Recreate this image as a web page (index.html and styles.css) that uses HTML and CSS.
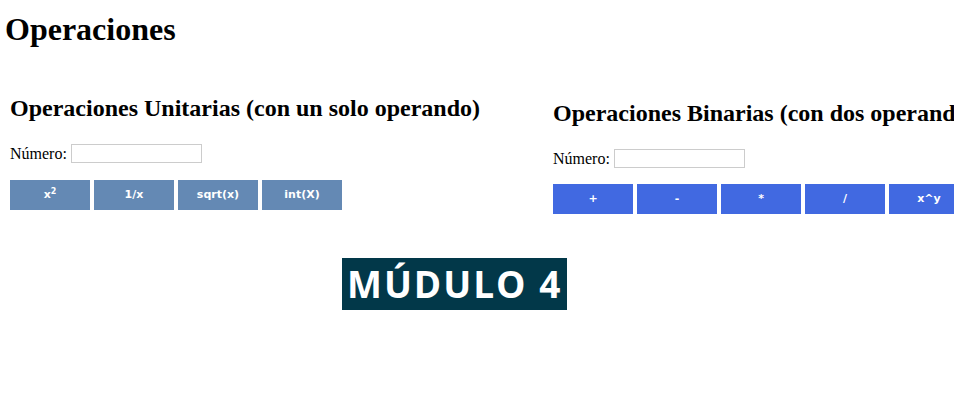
FILE: index.html
```html
<!DOCTYPE html>
<html lang="es">
<head>
<meta charset="utf-8">
<title>Operaciones</title>
<link rel="stylesheet" href="styles.css">
</head>
<body>
<h1 class="title">Operaciones</h1>
<div class="sections">
  <section class="panel panel-unit">
    <h2 class="panel-title">Operaciones Unitarias (con un solo operando)</h2>
    <div class="field">
      <label class="field-label">Número:</label>
      <input class="field-input" type="text">
    </div>
    <div class="buttons">
      <button class="btn btn-unit">x<sup>2</sup></button>
      <button class="btn btn-unit">1/x</button>
      <button class="btn btn-unit">sqrt(x)</button>
      <button class="btn btn-unit">int(X)</button>
    </div>
  </section>
  <section class="panel panel-bin">
    <h2 class="panel-title">Operaciones Binarias (con dos operandos)</h2>
    <div class="field">
      <label class="field-label">Número:</label>
      <input class="field-input" type="text">
    </div>
    <div class="buttons buttons-bin">
      <button class="btn btn-bin">+</button>
      <button class="btn btn-bin">-</button>
      <button class="btn btn-bin">*</button>
      <button class="btn btn-bin">/</button>
      <button class="btn btn-bin">x^y</button>
    </div>
  </section>
</div>
<div class="badge-row">
  <span class="badge">MÚDULO 4</span>
</div>
</body>
</html>
```
FILE: styles.css
```css
html, body {
  margin: 0;
  padding: 0;
  overflow: hidden;
  background: #fff;
}
body {
  font-family: "Liberation Serif", "Times New Roman", serif;
  color: #000;
  width: 954px;
}
.title {
  margin: 12px 0 0 5px;
  font-size: 32px;
  font-weight: bold;
  line-height: 35px;
}
.sections {
  display: flex;
  align-items: flex-start;
  gap: 73px;
  padding-left: 10px;
  margin-top: 48px;
  overflow: hidden;
}
.panel {
  flex: none;
}
.panel-bin {
  padding-top: 5px;
}
.panel-title {
  margin: 0;
  font-size: 24px;
  font-weight: bold;
  line-height: 27px;
  white-space: nowrap;
}
.field {
  display: flex;
  align-items: center;
  gap: 4px;
  margin-top: 22px;
  height: 19px;
  font-size: 16px;
}
.field-input {
  box-sizing: border-box;
  width: 131px;
  height: 19px;
  margin: 0;
  padding: 0 2px;
  border: 1px solid #cccccc;
  background: #fff;
  font-size: 13px;
}
.buttons {
  display: flex;
  gap: 4px;
  margin-top: 17px;
}
.buttons-bin {
  margin-top: 16px;
}
.btn {
  width: 80px;
  height: 30px;
  margin: 0;
  padding: 0;
  border: none;
  color: #fff;
  font-family: "DejaVu Sans", Verdana, sans-serif;
  font-weight: bold;
  font-size: 11px;
  line-height: 30px;
  text-align: center;
}
.btn sup {
  font-size: 8px;
  line-height: 0;
  vertical-align: 4px;
}
.btn-unit {
  background: #6489b4;
}
.btn-bin {
  background: #4169e1;
}
.badge-row {
  margin: 44px 0 0 342px;
}
.badge {
  display: inline-block;
  height: 52px;
  padding: 0 5px;
  background: #023849;
  color: #fff;
  font-family: "Open Sans", sans-serif;
  font-weight: 700;
  font-size: 37px;
  line-height: 52px;
  letter-spacing: 2px;
}
```
